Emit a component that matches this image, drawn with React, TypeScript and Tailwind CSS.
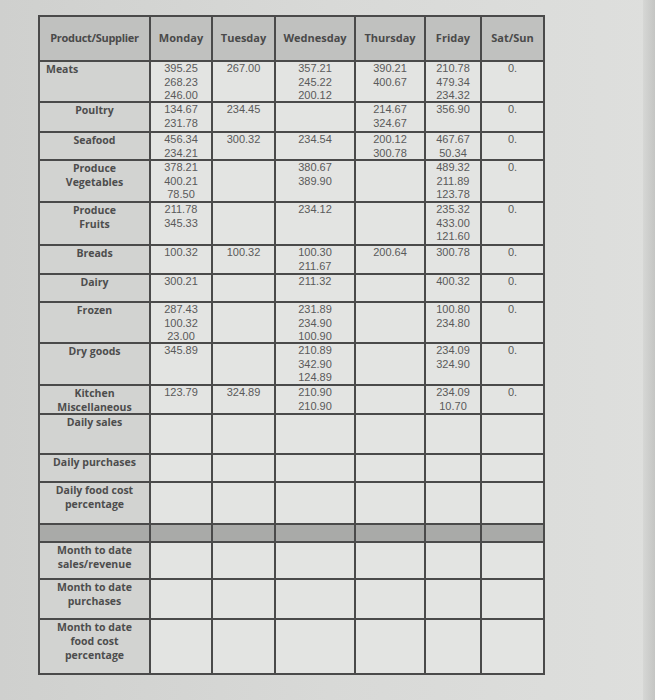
import React from "react";

type Row = {
  label: string[];
  left?: boolean;
  h: string;
  cells: string[][];
  band?: boolean;
};

const rows: Row[] = [
  { label: ["Meats"], left: true, h: "h-[41px]", cells: [["395.25", "268.23", "246.00"], ["267.00"], ["357.21", "245.22", "200.12"], ["390.21", "400.67"], ["210.78", "479.34", "234.32"], ["0."]] },
  { label: ["Poultry"], h: "h-[30px]", cells: [["134.67", "231.78"], ["234.45"], [], ["214.67", "324.67"], ["356.90"], ["0."]] },
  { label: ["Seafood"], h: "h-[28px]", cells: [["456.34", "234.21"], ["300.32"], ["234.54"], ["200.12", "300.78"], ["467.67", "50.34"], ["0."]] },
  { label: ["Produce", "Vegetables"], h: "h-[42px]", cells: [["378.21", "400.21", "78.50"], [], ["380.67", "389.90"], [], ["489.32", "211.89", "123.78"], ["0."]] },
  { label: ["Produce", "Fruits"], h: "h-[43px]", cells: [["211.78", "345.33"], [], ["234.12"], [], ["235.32", "433.00", "121.60"], ["0."]] },
  { label: ["Breads"], h: "h-[29px]", cells: [["100.32"], ["100.32"], ["100.30", "211.67"], ["200.64"], ["300.78"], ["0."]] },
  { label: ["Dairy"], h: "h-[28px]", cells: [["300.21"], [], ["211.32"], [], ["400.32"], ["0."]] },
  { label: ["Frozen"], h: "h-[41px]", cells: [["287.43", "100.32", "23.00"], [], ["231.89", "234.90", "100.90"], [], ["100.80", "234.80"], ["0."]] },
  { label: ["Dry goods"], h: "h-[42px]", cells: [["345.89"], [], ["210.89", "342.90", "124.89"], [], ["234.09", "324.90"], ["0."]] },
  { label: ["Kitchen", "Miscellaneous"], h: "h-[29px]", cells: [["123.79"], ["324.89"], ["210.90", "210.90"], [], ["234.09", "10.70"], ["0."]] },
  { label: ["Daily sales"], h: "h-[40px]", cells: [[], [], [], [], [], []] },
  { label: ["Daily purchases"], h: "h-[28px]", cells: [[], [], [], [], [], []] },
  { label: ["Daily food cost", "percentage"], h: "h-[42px]", cells: [[], [], [], [], [], []] },
  { label: [], band: true, h: "h-[18px]", cells: [[], [], [], [], [], []] },
  { label: ["Month to date", "sales/revenue"], h: "h-[37px]", cells: [[], [], [], [], [], []] },
  { label: ["Month to date", "purchases"], h: "h-[40px]", cells: [[], [], [], [], [], []] },
  { label: ["Month to date", "food cost", "percentage"], h: "h-[55px]", cells: [[], [], [], [], [], []] },
];

const headers = ["Monday", "Tuesday", "Wednesday", "Thursday", "Friday", "Sat/Sun"];

export default function App() {
  return (
    <div className="w-[655px] h-[700px] flex bg-gradient-to-r from-[#cfd0ce] via-[#d8d9d7] to-[#dedfdd] overflow-hidden">
      <div className="flex-1 pt-[15px] pl-[38px]">
        <table className="table-fixed border-collapse w-[505px] [font-family:'Open_Sans',sans-serif]">
          <colgroup>
            <col className="w-[111px]" />
            <col className="w-[62px]" />
            <col className="w-[63px]" />
            <col className="w-[80px]" />
            <col className="w-[70px]" />
            <col className="w-[56px]" />
            <col className="w-[63px]" />
          </colgroup>
          <thead>
            <tr className="h-[45px] bg-[#c0c1bf]">
              <th className="border-2 border-[#4a4a4a] text-[11px] font-bold text-[#4a4a4a] text-center align-middle tracking-[-0.3px]">Product/Supplier</th>
              {headers.map((h) => (
                <th key={h} className="border-2 border-[#4a4a4a] text-[11px] font-bold text-[#4a4a4a] text-center align-middle">{h}</th>
              ))}
            </tr>
          </thead>
          <tbody>
            {rows.map((r, i) => (
              <tr key={i} className={r.h}>
                <td className={`border-2 border-[#4a4a4a] align-top p-0 text-[10.5px] leading-[14px] font-bold text-[#4d4d4d] ${r.band ? "bg-[#a9aaa8]" : "bg-[#d2d3d1]"} ${r.left ? "text-left pl-[6px]" : "text-center"}`}>
                  <div className="h-0">
                    {r.label.map((l, j) => (
                      <div key={j}>{l}</div>
                    ))}
                  </div>
                </td>
                {r.cells.map((c, j) => (
                  <td key={j} className={`border-2 border-[#4a4a4a] align-top p-0 text-center text-[11px] leading-[13.5px] text-[#5a5a5a] [font-family:'Liberation_Sans',Arial,sans-serif] ${r.band ? "bg-[#a9aaa8]" : "bg-[#e3e4e2]"}`}>
                    <div className="h-0">
                      {c.map((v, k) => (
                        <div key={k}>{v}</div>
                      ))}
                    </div>
                  </td>
                ))}
              </tr>
            ))}
          </tbody>
        </table>
      </div>
      <div className="w-[12px] bg-gradient-to-r from-[#d6d7d5] to-[#c4c5c3]" />
    </div>
  );
}
